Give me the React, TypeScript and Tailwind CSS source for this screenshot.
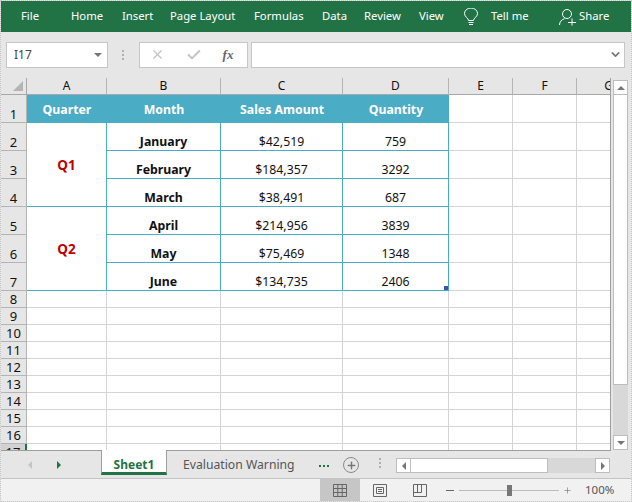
import React from "react";
import { X, Check, ChevronDown, Plus } from "lucide-react";

const cols = ["A", "B", "C", "D", "E", "F", "G"];
const data: string[][] = [
  ["January", "$42,519", "759"],
  ["February", "$184,357", "3292"],
  ["March", "$38,491", "687"],
  ["April", "$214,956", "3839"],
  ["May", "$75,469", "1348"],
  ["June", "$134,735", "2406"],
];
const emptyRows = [8, 9, 10, 11, 12, 13, 14, 15, 16, 17];
const menu = ["Home", "Insert", "Page Layout", "Formulas", "Data", "Review", "View"];
const menuW = ["w-[51px]", "w-[48px]", "w-[84px]", "w-[68px]", "w-[42px]", "w-[55px]", "w-[45px]"];

const RowHead = ({ n, tall }: { n: number; tall?: boolean }) => (
  <div
    className={`border-b flex justify-center text-[#111] text-[13px] leading-none ${
      n === 17 ? "bg-[#d2d2d2] border-r-2 border-r-[#217346] border-b-[#b4b4b4]" : "bg-[#e6e6e6] border-r border-[#b4b4b4]"
    } ${tall ? "items-end pb-[1px]" : "items-center"}`}
  >
    {n}
  </div>
);
const Empty = () => <div className="border-r border-b border-[#d4d4d4] bg-white" />;
const B = "bg-white border-r border-b border-[#4bacc6]";

export default function App() {
  return (
    <div className="w-[632px] h-[502px] box-border border border-dotted border-[#c8c8c8] bg-[#e6e6e6] flex flex-col overflow-hidden font-['Noto_Sans',sans-serif]">
      {/* ribbon tabs */}
      <div className="h-[31px] shrink-0 bg-[#217346] text-white text-[11.3px] flex items-center">
        <div className="w-[70px] pl-[20px]">File</div>
        {menu.map((m, i) => (
          <div key={m} className={`${menuW[i]} whitespace-nowrap`}>{m}</div>
        ))}
        <svg width="14" height="18" viewBox="0 0 14 18" fill="none" stroke="white" strokeWidth="1">
          <path d="M4.500 12.500c0-2.500-4-3.500-4-7a6.500 5.500 0 0 1 13 0c0 3.500-4 4.500-4 7z" />
          <path d="M4.500 14.500h5M5 16.500h4" />
        </svg>
        <div className="ml-[13px] w-[68px] whitespace-nowrap">Tell me</div>
        <svg width="17" height="18" viewBox="0 0 17 18" fill="none" stroke="white" strokeWidth="1">
          <circle cx="8" cy="6" r="4.500" />
          <path d="M.5 17c0-3.500 2.500-5.500 5-6.300M9 14.500h8M13 10.500v7" />
        </svg>
        <div className="ml-[3px]">Share</div>
      </div>

      {/* formula bar */}
      <div className="h-[46px] shrink-0 flex items-center pl-[5px] pr-[6px] pb-[1px] text-[12px]">
        <div className="w-[102px] h-[26px] bg-white border border-[#c6c6c6] flex items-center justify-between pl-[7px] pr-[5px] text-[#444]">
          <span>I17</span>
          <div className="w-0 h-0 border-x-[4px] border-x-transparent border-t-[4px] border-t-[#777]" />
        </div>
        <div className="w-[31px] flex flex-col items-center gap-[2px]">
          <div className="w-[2px] h-[2px] bg-[#b0b0b0]" />
          <div className="w-[2px] h-[2px] bg-[#b0b0b0]" />
          <div className="w-[2px] h-[2px] bg-[#b0b0b0]" />
        </div>
        <div className="w-[110px] h-[26px] bg-white border border-[#c6c6c6] flex items-center pl-[10px]">
          <X size={15} strokeWidth={2} className="text-[#c4c4c4]" />
          <Check size={16} strokeWidth={3} className="text-[#c4c4c4] ml-[21px]" />
          <span className="ml-[21px] text-[#666] text-[13px] italic font-['Liberation_Serif',serif] font-bold">fx</span>
        </div>
        <div className="ml-[3px] w-[375px] h-[26px] bg-white border border-[#c6c6c6] flex items-center justify-end pr-[2px]">
          <ChevronDown size={13} strokeWidth={3} className="text-[#777]" />
        </div>
      </div>

      {/* sheet area */}
      <div className="h-[373px] shrink-0 flex">
        <div className="w-[610px] h-[373px] grid grid-cols-[26px_80px_114px_122px_106px_64px_64px_64px] grid-rows-[17px_28px_28px_28px_28px_28px_28px_28px_repeat(10,17px)] overflow-hidden border-r border-b border-[#9e9e9e] text-[12.3px]">
          {/* corner */}
          <div className="border-r border-b border-[#a8a8a8] relative">
            <div className="absolute right-[3px] bottom-[3px] w-0 h-0 border-l-[10px] border-l-transparent border-b-[10px] border-b-[#b4b4b4]" />
          </div>
          {cols.map((c) => (
            <div key={c} className="border-b border-r border-b-[#a8a8a8] border-r-[#b4b4b4] flex items-end justify-center text-[#111] text-[12px] leading-[16px] overflow-hidden">
              {c}
            </div>
          ))}

          {/* row 1 */}
          <RowHead n={1} tall />
          {["Quarter", "Month", "Sales Amount", "Quantity"].map((h) => (
            <div key={h} className="bg-[#4bacc6] text-white font-bold flex items-center justify-center pt-[3px]">{h}</div>
          ))}
          <Empty />
          <Empty />
          <Empty />

          {/* data rows */}
          {data.map((r, i) => (
            <React.Fragment key={r[0]}>
              <RowHead n={i + 2} tall />
              {i === 0 && (
                <div className={`${B} row-span-3 flex items-center justify-center font-bold text-[#c00000] text-[13.500px] pt-[2px]`}>Q1</div>
              )}
              {i === 3 && (
                <div className={`${B} row-span-3 flex items-center justify-center font-bold text-[#c00000] text-[13.500px] pt-[2px]`}>Q2</div>
              )}
              <div className={`${B} flex items-end justify-center font-bold text-[#111] leading-[17px]`}>{r[0]}</div>
              <div className={`${B} flex items-end justify-center text-[#111] leading-[17px]`}>{r[1]}</div>
              <div className={`${B} flex items-end justify-center text-[#111] leading-[17px] relative`}>
                {r[2]}
                {i === 5 && <div className="absolute right-0 bottom-0 w-[4px] h-[4px] bg-[#3f51b5]" />}
              </div>
              <Empty />
              <Empty />
              <Empty />
            </React.Fragment>
          ))}

          {/* empty rows */}
          {emptyRows.map((n) => (
            <React.Fragment key={n}>
              <RowHead n={n} />
              {cols.map((c) => (
                <Empty key={c} />
              ))}
            </React.Fragment>
          ))}
        </div>

        {/* vertical scrollbar */}
        <div className="w-[20px] pt-[2px] pl-[2px] pr-[3px] flex flex-col">
          <div className="h-[15px] bg-white border border-[#bdbdbd] flex items-center justify-center">
            <div className="w-0 h-0 border-x-[4px] border-x-transparent border-b-[4px] border-b-[#777]" />
          </div>
          <div className="h-[290px] bg-white border-x border-b border-[#bdbdbd]" />
          <div className="flex-1 bg-[#d8d8d8]" />
          <div className="h-[15px] bg-white border border-[#bdbdbd] flex items-center justify-center mb-[1px]">
            <div className="w-0 h-0 border-x-[4px] border-x-transparent border-t-[4px] border-t-[#777]" />
          </div>
        </div>
      </div>

      {/* sheet tabs */}
      <div className="h-[28px] shrink-0 border-b border-b-[#c4c4c4] flex text-[12px]">
        <div className="w-[100px] flex items-center pl-[27px]">
          <div className="w-0 h-0 border-y-[4px] border-y-transparent border-r-[4px] border-r-[#c4c4c4]" />
          <div className="ml-[25px] w-0 h-0 border-y-[4px] border-y-transparent border-l-[4px] border-l-[#217346]" />
        </div>
        <div className="w-[66px] h-[25px] mt-[-1px] bg-white border-x border-[#9e9e9e] border-b-[3px] border-b-[#217346] flex items-center justify-center font-bold text-[#217346] leading-none pt-[7px]">
          Sheet1
        </div>
        <div className="ml-[16px] w-[135px] text-[12.200px] flex items-center text-[#555] whitespace-nowrap pt-[2px]">Evaluation Warning</div>
        <div className="w-[25px] pl-[1px] pt-[11px] flex justify-start gap-[2px] h-[14px] mt-[3px]">
          <div className="w-[2px] h-[2px] bg-[#217346]" />
          <div className="w-[2px] h-[2px] bg-[#217346]" />
          <div className="w-[2px] h-[2px] bg-[#217346]" />
        </div>
        <div className="mt-[6px] w-[16px] h-[16px] rounded-full border border-[#8a8a8a] flex items-center justify-center text-[#777]">
          <Plus size={11} strokeWidth={3} />
        </div>
        <div className="w-[37px] pl-[5px] mt-[7px] flex flex-col items-center gap-[2px]">
          <div className="w-[2px] h-[2px] bg-[#b0b0b0]" />
          <div className="w-[2px] h-[2px] bg-[#b0b0b0]" />
          <div className="w-[2px] h-[2px] bg-[#b0b0b0]" />
        </div>
        <div className="w-[214px] h-[15px] mt-[7px] flex">
          <div className="w-[15px] bg-white border border-[#bdbdbd] flex items-center justify-center">
            <div className="w-0 h-0 border-y-[4px] border-y-transparent border-r-[4px] border-r-[#777]" />
          </div>
          <div className="w-[137px] bg-white border-y border-r border-[#bdbdbd]" />
          <div className="flex-1 bg-[#d8d8d8]" />
          <div className="w-[15px] bg-white border border-[#bdbdbd] flex items-center justify-center">
            <div className="w-0 h-0 border-y-[4px] border-y-transparent border-l-[4px] border-l-[#777]" />
          </div>
        </div>
      </div>

      {/* status bar */}
      <div className="flex-1 bg-[#f1f1f1] flex items-center text-[11.500px] text-[#555]">
        <div className="ml-[319px] w-[40px] h-[22px] bg-[#c6c6c6] flex items-center justify-center">
          <svg width="14" height="13" viewBox="0 0 14 13" fill="none" stroke="#666" strokeWidth="1">
            <path d="M.5.500h13v12H.500zM.5 4.500h13M.5 8.500h13M4.800.500v12M9.200.500v12" />
          </svg>
        </div>
        <div className="w-[40px] flex justify-center">
          <svg width="14" height="13" viewBox="0 0 14 13" fill="none" stroke="#666" strokeWidth="1">
            <path d="M.5.500h13v12H.500zM3.500 3.500h7v6h-7zM5 5.500h4M5 7.500h4" />
          </svg>
        </div>
        <div className="w-[40px] flex justify-center">
          <svg width="14" height="13" viewBox="0 0 14 13" fill="none" stroke="#666" strokeWidth="1">
            <path d="M.5.500h13v12H.500zM.5 8.500h8M4.500.500v8M8.500.500v8" />
          </svg>
        </div>
        <div className="ml-[6px] w-[8px] h-[1px] bg-[#666]" />
        <div className="ml-[5px] w-[100px] h-[1px] bg-[#bcbcbc] relative">
          <div className="absolute left-[48px] top-[-5px] w-[5px] h-[11px] bg-[#777]" />
        </div>
        <Plus size={9} strokeWidth={1.500} className="ml-[4px] text-[#666]" />
        <div className="ml-[13px]">100%</div>
      </div>
    </div>
  );
}
